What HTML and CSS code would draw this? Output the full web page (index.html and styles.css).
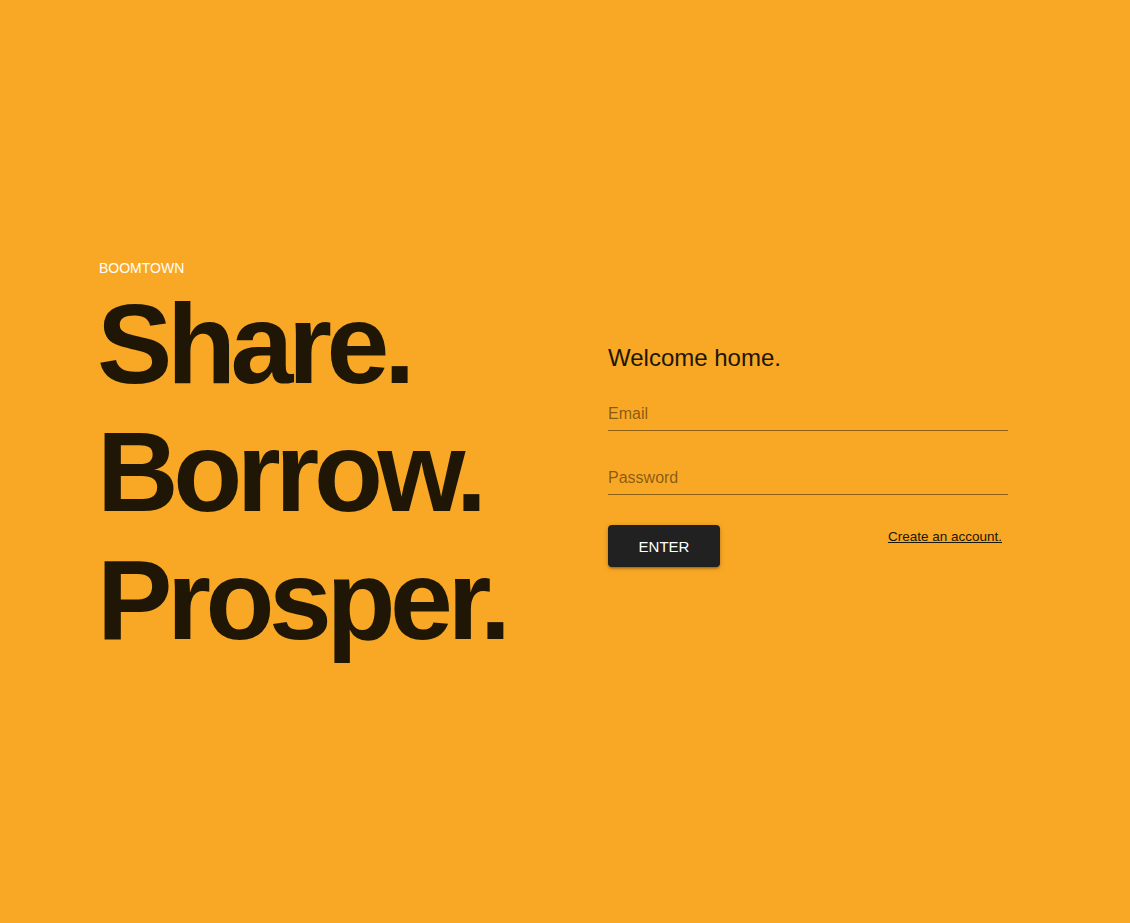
FILE: index.html
```html
<!DOCTYPE html>
<html>
<head>
<meta charset="utf-8">
<link rel="stylesheet" href="styles.css">
</head>
<body>
<main class="page">
  <section class="hero">
    <p class="brand">BOOMTOWN</p>
    <h1 class="headline">
      <span>Share.</span>
      <span>Borrow.</span>
      <span>Prosper.</span>
    </h1>
  </section>
  <section class="login">
    <h2 class="welcome">Welcome home.</h2>
    <form class="form">
      <label class="field"><input type="email" placeholder="Email"></label>
      <label class="field"><input type="password" placeholder="Password"></label>
      <div class="actions">
        <button type="button" class="enter">ENTER</button>
        <a href="#" class="create">Create an account.</a>
      </div>
    </form>
  </section>
</main>
</body>
</html>
```

FILE: styles.css
```css
html, body {
  margin: 0;
  padding: 0;
  background: #f9a825;
  font-family: "Liberation Sans", Arial, sans-serif;
}
.page {
  min-height: 100vh;
  display: flex;
  align-items: center;
  padding-left: 97px;
  box-sizing: border-box;
}
.hero {
  width: 511px;
}
.brand {
  margin: 0 0 0 2px;
  color: #fff;
  font-size: 14px;
  line-height: 16px;
}
.headline {
  margin: 4px 0 0 0;
  color: #201605;
  font-size: 113px;
  line-height: 128px;
  font-weight: 700;
  letter-spacing: -0.048em;
}
.headline span {
  display: block;
}
.login {
  width: 400px;
  padding-bottom: 12px;
}
.welcome {
  margin: 0;
  font-weight: 400;
  font-size: 24px;
  line-height: 28px;
  color: #201605;
}
.form {
  margin-top: 25px;
}
.field {
  display: block;
  margin-bottom: 30px;
}
.field input {
  width: 100%;
  box-sizing: border-box;
  border: none;
  border-bottom: 1px solid rgba(0,0,0,0.42);
  background: transparent;
  font-family: inherit;
  font-size: 16px;
  padding: 8px 0 7px;
  color: #201605;
  outline: none;
}
.field input::placeholder {
  color: rgba(0,0,0,0.48);
}
.actions {
  display: flex;
  justify-content: space-between;
  align-items: flex-start;
  margin-top: 4px;
  padding-right: 6px;
}
.enter {
  width: 112px;
  height: 42px;
  border: none;
  border-radius: 4px;
  background: #212121;
  color: #fff;
  font-family: inherit;
  font-size: 15px;
  box-shadow: 0 1px 5px rgba(0,0,0,0.2), 0 2px 2px rgba(0,0,0,0.14), 0 3px 1px -2px rgba(0,0,0,0.12);
}
.create {
  margin-top: 4px;
  color: #201605;
  font-size: 13.5px;
}
```
